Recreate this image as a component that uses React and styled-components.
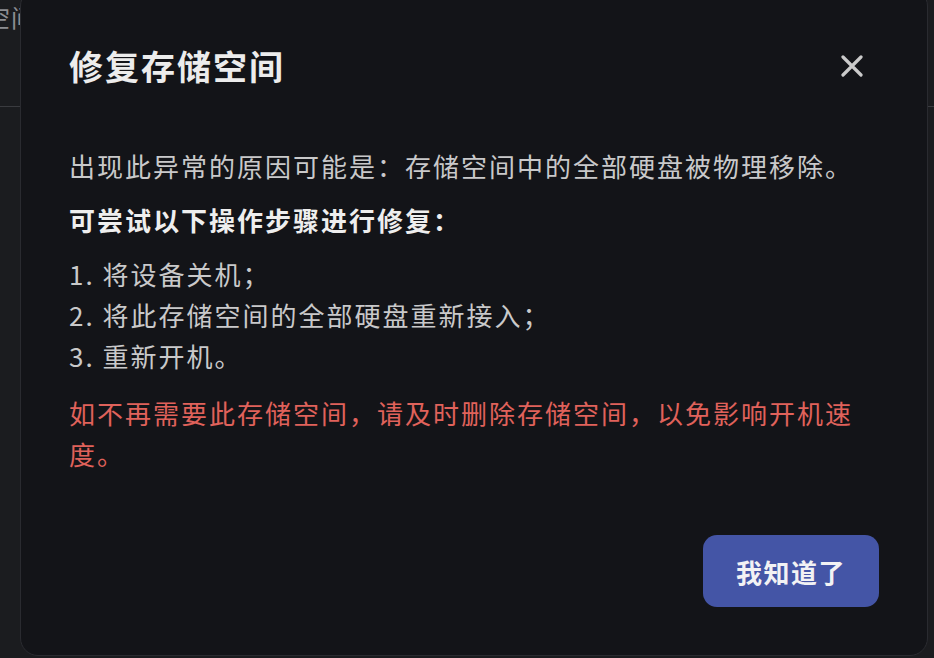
import styled, { createGlobalStyle } from 'styled-components';

const GlobalStyle = createGlobalStyle`
  html, body {
    margin: 0;
    padding: 0;
    background: #1b1c1f;
    overflow: hidden;
  }
  body {
    font-family: "Noto Sans CJK SC", "Noto Sans", sans-serif;
  }
`;

const Page = styled.div`
  width: 934px;
  height: 658px;
  position: relative;
  overflow: hidden;
  background: #1b1c1f;
`;

const PageHeader = styled.div`
  height: 106px;
  border-bottom: 1px solid #3a3b3f;
  display: flex;
  align-items: flex-start;
`;

const PageTitle = styled.div`
  margin-top: -1px;
  margin-left: -64px;
  font-size: 24px;
  line-height: 36px;
  color: #8d8e92;
  letter-spacing: 1px;
`;

const Modal = styled.div`
  position: absolute;
  left: 20px;
  top: -12px;
  width: 908px;
  box-sizing: border-box;
  background: #131418;
  border: 1px solid #2a2b30;
  border-radius: 18px;
  padding: 57px 48px 48px 48px;
  display: flex;
  flex-direction: column;
`;

const ModalHeader = styled.div`
  display: flex;
  align-items: center;
  justify-content: space-between;
`;

const Title = styled.h2`
  margin: 0;
  font-size: 34px;
  line-height: 40px;
  font-weight: 700;
  letter-spacing: 2px;
  color: #ececec;
`;

const CloseButton = styled.button`
  background: none;
  border: none;
  padding: 0;
  margin-right: 16px;
  width: 22px;
  height: 22px;
  display: flex;
  align-items: center;
  justify-content: center;
  cursor: pointer;
`;

const Body = styled.div`
  margin-top: 59px;
  display: flex;
  flex-direction: column;
`;

const Text = styled.p`
  margin: ${(p) => p.$gap || 0}px 0 0 0;
  font-size: 26px;
  line-height: 41px;
  letter-spacing: 2px;
  font-weight: ${(p) => (p.$bold ? 700 : 400)};
  color: ${(p) => p.$color || '#c9c9ca'};
`;

const Steps = styled.ol`
  margin: 13px 0 0 0;
  padding: 0;
  list-style: none;
`;

const Step = styled.li`
  font-size: 26px;
  line-height: 41px;
  letter-spacing: 2px;
  color: #c9c9ca;
`;

const Footer = styled.div`
  margin-top: 61px;
  display: flex;
  justify-content: flex-end;
`;

const PrimaryButton = styled.button`
  width: 176px;
  height: 72px;
  border: none;
  border-radius: 14px;
  background: #4455a6;
  color: #f2f2f4;
  font-family: inherit;
  font-size: 26px;
  font-weight: 700;
  letter-spacing: 1.5px;
  cursor: pointer;
`;

const steps = ['1. 将设备关机；', '2. 将此存储空间的全部硬盘重新接入；', '3. 重新开机。'];

export default function App() {
  return (
    <>
      <GlobalStyle />
      <Page>
        <PageHeader>
          <PageTitle>存储空间</PageTitle>
        </PageHeader>
        <Modal>
          <ModalHeader>
            <Title>修复存储空间</Title>
            <CloseButton aria-label="关闭">
              <svg width="22" height="22" viewBox="0 0 22 22">
                <path d="M2 2 L20 20 M20 2 L2 20" stroke="#cbcbcb" strokeWidth="3.2" strokeLinecap="round" />
              </svg>
            </CloseButton>
          </ModalHeader>
          <Body>
            <Text>出现此异常的原因可能是：存储空间中的全部硬盘被物理移除。</Text>
            <Text $bold $color="#eeeeee" $gap={13}>可尝试以下操作步骤进行修复：</Text>
            <Steps>
              {steps.map((s) => (
                <Step key={s}>{s}</Step>
              ))}
            </Steps>
            <Text $color="#e0625b" $gap={16}>如不再需要此存储空间，请及时删除存储空间，以免影响开机速度。</Text>
          </Body>
          <Footer>
            <PrimaryButton>我知道了</PrimaryButton>
          </Footer>
        </Modal>
      </Page>
    </>
  );
}
